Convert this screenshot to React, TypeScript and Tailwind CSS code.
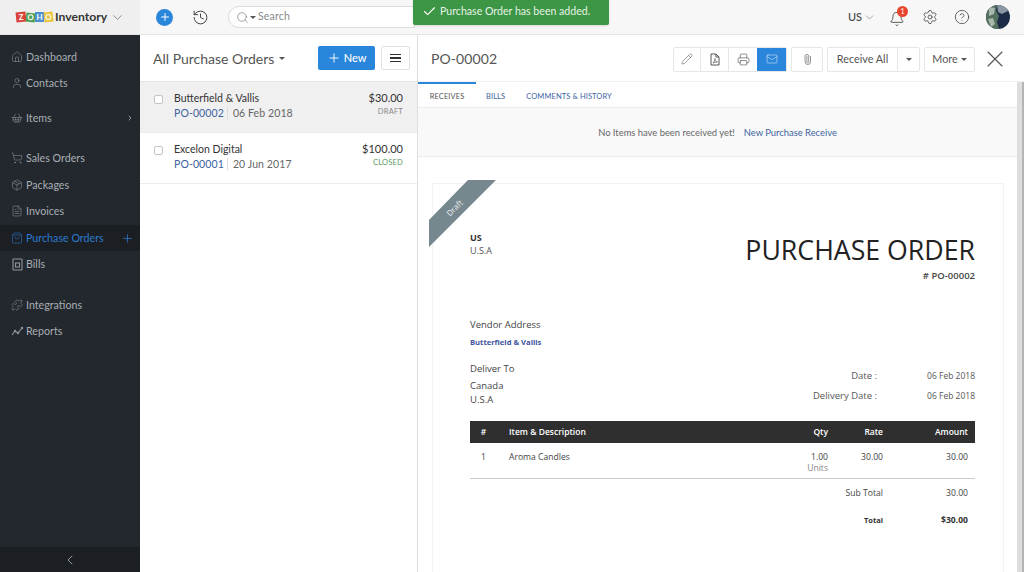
import React from "react";
import { Home, User, ShoppingBasket, ShoppingCart, Package, FileText, ShoppingBag, Puzzle, ChevronRight, ChevronLeft, ChevronDown, Plus, Check, Search, History, Bell, Settings, CircleHelp, Pencil, Printer, Mail, Paperclip, X } from "lucide-react";

const Caret = () => <span className="inline-block align-middle w-0 h-0 border-l-[3px] border-r-[3px] border-t-[3px] border-l-transparent border-r-transparent border-t-current" />;

const BillIcon = (p: any) => (
  <svg width="13" height="13" viewBox="0 0 13 13" fill="none" stroke="currentColor" strokeWidth="1" {...p}>
    <rect x="2" y="1" width="9" height="11" rx="0.5" />
    <rect x="4.5" y="5" width="4" height="4" />
  </svg>
);
const TrendIcon = (p: any) => (
  <svg width="13" height="13" viewBox="0 0 13 13" fill="none" stroke="currentColor" strokeWidth="1" {...p}>
    <path d="M1 10l3-4 3 2 4-5" />
    <circle cx="4" cy="6" r="0.7" /><circle cx="7" cy="8" r="0.7" /><circle cx="11" cy="3" r="0.7" />
  </svg>
);
const PdfIcon = (p: any) => (
  <svg width="12" height="13" viewBox="0 0 12 13" fill="none" stroke="currentColor" strokeWidth="1" {...p}>
    <path d="M2 1h5l3 3v8H2z" /><path d="M7 1v3h3" /><path d="M4 10c1-1 2-3 2-4.500 0 1.500 1 3 2.500 3.500-1.500 0-3 .3-4.500 1z" strokeWidth="0.7" />
  </svg>
);

function NavItem({ icon: I, label, active, mt }: any) {
  return (
    <div className={`flex items-center pl-[11px] pr-[6px] h-[26px] ${mt || ""} ${active ? "bg-[#1b1f24] text-[#2a7bcf]" : "text-[#a9aeb4]"}`}>
      <span className="w-[15px] flex items-center"><I size={12} strokeWidth={1.1} className={active ? "text-[#2a7bcf]" : "text-[#8f949a]"} /></span>
      <span className="text-[10.7px] flex-1">{label}</span>
      {active && <Plus size={13} strokeWidth={1.4} className="text-[#2a7bcf]" />}
      {label === "Items" && <ChevronRight size={8} strokeWidth={3} className="text-[#8f949a]" />}
    </div>
  );
}

function ListRow({ name, po, date, amt, st, stc, sel }: any) {
  return (
    <div className={`flex h-[51px] border-b border-[#ececec] pl-[14px] pr-[14px] pt-[8px] ${sel ? "bg-[#f0f0f0]" : "bg-white"}`}>
      <div className="w-[9px] h-[9px] mt-[5px] border border-[#c4c4c4] rounded-[2px] bg-white" />
      <div className="ml-[11px] flex-1">
        <div className="text-[10.5px] leading-[16px] text-[#333]">{name}</div>
        <div className="text-[10.5px] leading-[16px] -mt-[1px] text-[#666] tracking-[0.1px]"><span className="text-[#40639f]">{po}</span><span className="border-l border-[#ddd] ml-[3px] pl-[5px]">{date}</span></div>
      </div>
      <div className="text-right">
        <div className="text-[11px] leading-[16px] text-[#333]">{amt}</div>
        <div className={`text-[7.5px] leading-[11px] tracking-[0.2px] ${stc}`}>{st}</div>
      </div>
    </div>
  );
}

const IconBtn = ({ children, cls = "" }: any) => <div className={`flex items-center justify-center h-[23px] ${cls}`}>{children}</div>;

export default function App() {
  return (
    <div className="relative w-[1024px] h-[572px] overflow-hidden bg-white flex flex-col font-['Lato','Open_Sans',sans-serif]">
      <header className="h-[35px] shrink-0 flex items-center bg-[#f7f7f7] border-b border-[#e4e4e4]">
        <div className="w-[140px] h-full bg-[#efefef] flex items-center pl-[16px]">
          <div className="flex items-center h-[12px] text-[8px] leading-[11px] font-bold text-white">
            <span className="w-[10px] h-[10px] bg-[#d8433a] flex items-center justify-center -rotate-6">Z</span>
            <span className="w-[9px] h-[9px] bg-[#4f9e52] flex items-center justify-center rotate-6">O</span>
            <span className="w-[9px] h-[10px] bg-[#4a8fd0] flex items-center justify-center">H</span>
            <span className="w-[9px] h-[10px] bg-[#e6c43e] flex items-center justify-center -rotate-6">O</span>
          </div>
          <span className="ml-[2px] text-[12.2px] font-bold text-[#333]">Inventory</span>
          <ChevronDown size={15} strokeWidth={1} className="ml-[3px] text-[#555]" />
        </div>
        <div className="w-[17px] h-[17px] ml-[16px] rounded-full bg-[#2a86db] flex items-center justify-center"><Plus size={12} strokeWidth={2} className="text-white" /></div>
        <History size={17} strokeWidth={1.4} className="ml-[19px] text-[#444]" />
        <div className="ml-[19px] w-[187px] h-[22px] bg-white border border-[#dcdcdc] rounded-l-full flex items-center pl-[7px] text-[#777]">
          <Search size={13} strokeWidth={1.2} /><span className="ml-[1px] flex text-[#555]"><Caret /></span>
          <span className="ml-[2px] text-[10.5px] text-[#888] tracking-[0.2px]">Search</span>
        </div>
        <div className="flex-1" />
        <span className="text-[11px] text-[#444] font-medium">US</span>
        <ChevronDown size={13} strokeWidth={1} className="ml-[1px] text-[#666]" />
        <div className="relative ml-[13px] w-[16px] h-[18px] flex items-center justify-center">
          <Bell size={16} strokeWidth={1.3} className="text-[#444] mt-[3px]" />
          <span className="absolute -top-[2px] right-[-3px] w-[11px] h-[11px] rounded-full bg-[#e8452e] text-white text-[7px] leading-[11px] text-center">1</span>
        </div>
        <Settings size={16} strokeWidth={1.2} className="ml-[17px] text-[#444]" />
        <CircleHelp size={16} strokeWidth={1.2} className="ml-[16px] text-[#444]" />
        <svg width="24" height="24" viewBox="0 0 24 24" className="ml-[16px] mr-[14px]">
          <defs><clipPath id="av"><circle cx="12" cy="12" r="12" /></clipPath></defs>
          <g clipPath="url(#av)">
            <rect width="24" height="24" fill="#1c2c46" />
            <path d="M0 0h11l-1 6 3 5-2 6 2 7H0z" fill="#54705f" />
            <path d="M3 2l6 1-1 6-5 2zM2 14l5-1 2 6-4 3z" fill="#a9b8ad" />
            <path d="M11 0h9l2 6-6 3-4-2z" fill="#8b98a3" />
          </g>
        </svg>
      </header>

      <div className="flex flex-1 min-h-0">
        <aside className="w-[140px] shrink-0 bg-[#22282e] flex flex-col">
          <div className="pt-[9px] flex flex-col">
            <NavItem icon={Home} label="Dashboard" />
            <NavItem icon={User} label="Contacts" />
            <NavItem icon={ShoppingBasket} label="Items" mt="mt-[9px]" />
            <NavItem icon={ShoppingCart} label="Sales Orders" mt="mt-[14px]" />
            <NavItem icon={Package} label="Packages" mt="mt-[1px]" />
            <NavItem icon={FileText} label="Invoices" />
            <NavItem icon={ShoppingBag} label="Purchase Orders" active mt="mt-[1px]" />
            <NavItem icon={BillIcon} label="Bills" />
            <NavItem icon={Puzzle} label="Integrations" mt="mt-[15px]" />
            <NavItem icon={TrendIcon} label="Reports" />
          </div>
          <div className="mt-auto h-[25px] bg-[#1b1f24] flex items-center justify-center"><ChevronLeft size={16} strokeWidth={1.2} className="text-[#b4b9bf]" /></div>
        </aside>

        <section className="w-[278px] shrink-0 border-r border-[#dedede] flex flex-col">
          <div className="h-[47px] border-b border-[#e4e4e4] flex items-center pl-[13px] pr-[7px]">
            <span className="text-[14px] text-[#555]">All Purchase Orders</span>
            <span className="ml-[5px] flex text-[#555]"><Caret /></span>
            <div className="ml-auto w-[57px] h-[24px] rounded-[2px] bg-[#2a86db] text-white flex items-center justify-center text-[11px] font-medium"><Plus size={14} strokeWidth={1.6} className="mr-[3px]" />New</div>
            <div className="ml-[6px] w-[29px] h-[24px] rounded-[2px] border border-[#e0e0e0] flex flex-col gap-[2px] items-center justify-center">
              <span className="w-[11px] h-[1.500px] bg-[#333]" /><span className="w-[11px] h-[1.500px] bg-[#333]" /><span className="w-[11px] h-[1.500px] bg-[#333]" />
            </div>
          </div>
          <ListRow sel name="Butterfield & Vallis" po="PO-00002" date="06 Feb 2018" amt="$30.00" st="DRAFT" stc="text-[#888]" />
          <ListRow name="Excelon Digital" po="PO-00001" date="20 Jun 2017" amt="$100.00" st="CLOSED" stc="text-[#5a9a5e]" />
        </section>

        <main className="flex-1 min-w-0 flex flex-col">
          <div className="h-[47px] shrink-0 flex items-center pl-[13px] pr-[15px] pt-[2px] border-b border-[#f2f2f2]">
            <span className="text-[14px] text-[#555] tracking-[0.1px] -mt-[1px]">PO-00002</span>
            <div className="ml-auto flex items-center text-[#555]">
              <div className="flex border border-[#e6e6e6] rounded-[2px]">
                <IconBtn cls="w-[27px] border-r border-[#e6e6e6]"><Pencil size={12} strokeWidth={1.1} /></IconBtn>
                <IconBtn cls="w-[28px] border-r border-[#e6e6e6]"><PdfIcon /></IconBtn>
                <IconBtn cls="w-[28px]"><Printer size={13} strokeWidth={1.2} /></IconBtn>
                <IconBtn cls="w-[29px] bg-[#2a86db] text-[#cfe4f8]"><Mail size={12} strokeWidth={1.2} /></IconBtn>
              </div>
              <div className="ml-[4px] border border-[#e6e6e6] rounded-[2px]"><IconBtn cls="w-[30px]"><Paperclip size={11} strokeWidth={1.3} className="rotate-[-45deg]" /></IconBtn></div>
              <div className="ml-[4px] flex border border-[#e6e6e6] rounded-[2px] text-[10.8px] text-[#555]">
                <IconBtn cls="w-[70px] border-r border-[#e6e6e6]">Receive All</IconBtn>
                <IconBtn cls="w-[21px]"><Caret /></IconBtn>
              </div>
              <div className="ml-[4px] border border-[#e6e6e6] rounded-[2px] text-[10.8px] text-[#555]"><IconBtn cls="w-[49px]">More<span className="ml-[3px] flex"><Caret /></span></IconBtn></div>
              <X size={28} strokeWidth={1} className="ml-[6px] text-[#555]" />
            </div>
          </div>

          <div className="flex-1 min-h-0 flex">
            <div className="flex-1 min-w-0 flex flex-col">
              <div className="h-[26px] shrink-0 flex items-stretch text-[7.5px] tracking-[0.1px] border-b border-[#ececec]">
                <div className="w-[58px] border-t-2 border-[#2a86db] flex items-center justify-center pt-[3px] text-[#555]">RECEIVES</div>
                <div className="ml-[10px] flex items-center pt-[5px] text-[#40639f]">BILLS</div>
                <div className="ml-[21px] flex items-center pt-[5px] text-[#40639f]">COMMENTS &amp; HISTORY</div>
              </div>
              <div className="h-[49px] shrink-0 bg-[#f9f9f9] border-b border-[#ececec] flex items-center justify-center pt-[3px] text-[9.4px] text-[#666]">
                No Items have been received yet!<span className="ml-[9px] text-[#40639f]">New Purchase Receive</span>
              </div>
              <div className="relative ml-[14px] mr-[13px] mt-[26px] flex-1 border-l border-t border-r border-[#f3f3f3] pl-[37px] pr-[28px] pt-[47px] font-['Open_Sans',sans-serif] text-[#333]">
                <div className="absolute left-[-4px] top-[-4px] w-[68px] h-[68px] overflow-hidden">
                  <svg width="68" height="68" viewBox="0 0 68 68"><polygon points="0,40 39,0 67,0 0,67" fill="#76878e" /></svg>
                  <span className="absolute left-[16px] top-[22px] -rotate-45 text-[8px] text-[#e8eef0]">Draft</span>
                </div>
                <div className="flex justify-between">
                  <div>
                    <div className="text-[9px] leading-[13px] font-bold">US</div>
                    <div className="text-[9px] leading-[13px] text-[#555]">U.S.A</div>
                  </div>
                  <div className="text-right">
                    <div className="text-[26.7px] leading-[28px] text-[#222] mt-[5px]">PURCHASE ORDER</div>
                    <div className="mt-[6px] text-[9.500px] leading-[12px] font-semibold text-[#444]"># PO-00002</div>
                  </div>
                </div>
                <div className="mt-[36px] text-[9.500px] leading-[14px] text-[#444]">Vendor Address</div>
                <div className="mt-[4px] text-[7.600px] leading-[12px] font-bold text-[#40539f]">Butterfield &amp; Vallis</div>
                <div className="flex justify-between">
                  <div>
                    <div className="mt-[14px] text-[9.500px] leading-[14px] text-[#444]">Deliver To</div>
                    <div className="mt-[3px] text-[9.500px] leading-[14px] text-[#444]">Canada</div>
                    <div className="text-[9.500px] leading-[14px] text-[#444]">U.S.A</div>
                  </div>
                  <div className="pt-[18px] text-[9.500px] text-[#555]">
                    <div className="flex h-[20px] items-center"><span className="flex-1 text-right">Date :</span><span className="w-[98px] text-right text-[8.500px]">06 Feb 2018</span></div>
                    <div className="flex h-[20px] items-center"><span className="text-right">Delivery Date :</span><span className="w-[98px] text-right text-[8.500px]">06 Feb 2018</span></div>
                  </div>
                </div>
                <div className="mt-[14px] h-[22px] bg-[#2f2f2f] text-white font-semibold text-[8.500px] flex items-center">
                  <span className="w-[27px] text-center">#</span>
                  <span className="ml-[12px] flex-1">Item &amp; Description</span>
                  <span className="w-[60px] text-right">Qty</span>
                  <span className="w-[55px] text-right">Rate</span>
                  <span className="w-[92px] text-right pr-[7px]">Amount</span>
                </div>
                <div className="h-[36px] border-b border-[#ccc] flex pt-[9px] text-[8.600px] leading-[11px] text-[#444]">
                  <span className="w-[27px] text-center">1</span>
                  <span className="ml-[12px] flex-1">Aroma Candles</span>
                  <span className="w-[60px] text-right">1.00<br /><span className="text-[#888]">Units</span></span>
                  <span className="w-[55px] text-right">30.00</span>
                  <span className="w-[92px] text-right pr-[7px]">30.00</span>
                </div>
                <div className="flex text-[8.600px] text-[#444] mt-[8px] leading-[12px]">
                  <span className="flex-1 text-right">Sub Total</span><span className="w-[92px] text-right pr-[7px]">30.00</span>
                </div>
                <div className="flex text-[7.500px] font-bold text-[#333] mt-[15px] leading-[12px]">
                  <span className="flex-1 text-right">Total</span><span className="w-[92px] text-right pr-[7px] text-[8.600px]">$30.00</span>
                </div>
              </div>
            </div>
            <div className="w-[7px] shrink-0 bg-[#dedede] border-r-2 border-[#b5b5b5]" />
          </div>
        </main>
      </div>

      <div className="absolute left-[413px] top-0 w-[196px] h-[25px] bg-[#3d9645] rounded-b-[2px] shadow-sm flex items-center pl-[9px] pb-[2px] text-white text-[10.6px]">
        <Check size={15} strokeWidth={1.8} />
        <span className="ml-[3px] text-[#e6f3e7]">Purchase Order has been added.</span>
      </div>
    </div>
  );
}
